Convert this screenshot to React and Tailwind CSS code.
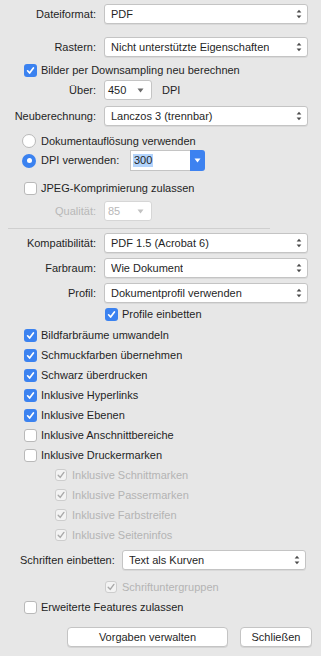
import React from 'react';

const font = { fontFamily: '"Liberation Sans", Arial, sans-serif' };

const UpDown = () => (
  <svg width="6" height="10" viewBox="0 0 6 10" className="shrink-0">
    <path d="M3 0.8 L5.4 3.6 H0.6 Z" fill="#4a4a4a" />
    <path d="M3 9.2 L0.6 6.4 H5.4 Z" fill="#4a4a4a" />
  </svg>
);

const DownTri = ({ color = '#6b6b6b' }) => (
  <svg width="7" height="5" viewBox="0 0 7 5" className="shrink-0">
    <path d="M0.5 0.5 H6.5 L3.5 4.5 Z" fill={color} />
  </svg>
);

const Select = ({ value, className = '' }) => (
  <div className={`h-[20px] flex items-center justify-between bg-white border border-[#c4c4c4] rounded-[3px] shadow-[0_1px_0_rgba(0,0,0,0.06)] pl-[6px] pr-[5px] ${className}`}>
    <span className="text-[#1f1f1f] truncate">{value}</span>
    <UpDown />
  </div>
);

const Popup = ({ value, disabled }) => (
  <div className={`h-[20px] w-[48px] flex items-center justify-between bg-white border rounded-[3px] pl-[3px] pr-[7px] ${disabled ? 'border-[#d6d6d6] text-[#b8b8b8]' : 'border-[#c4c4c4] text-[#1f1f1f]'}`}>
    <span>{value}</span>
    <DownTri color={disabled ? '#c2c2c2' : '#6b6b6b'} />
  </div>
);

const Check = ({ checked, disabled }) => {
  if (disabled) {
    return (
      <div className="w-[12px] h-[12px] shrink-0 rounded-[3px] border border-[#cdcdcd] bg-[#f3f3f3] flex items-center justify-center">
        <svg width="10" height="10" viewBox="0 0 10 10">
          <path d="M2.2 5.2 L4.2 7.4 L7.9 2.4" fill="none" stroke="#a9a9a9" strokeWidth="1.4" strokeLinecap="round" strokeLinejoin="round" />
        </svg>
      </div>
    );
  }
  if (checked) {
    return (
      <div className="w-[13px] h-[13px] shrink-0 rounded-[3px] bg-[#3b82f0] flex items-center justify-center">
        <svg width="11" height="11" viewBox="0 0 11 11">
          <path d="M2.6 5.8 L4.6 8 L8.4 3" fill="none" stroke="white" strokeWidth="1.7" strokeLinecap="round" strokeLinejoin="round" />
        </svg>
      </div>
    );
  }
  return <div className="w-[13px] h-[13px] shrink-0 rounded-[3px] border border-[#b9b9b9] bg-white" />;
};

const Radio = ({ checked }) =>
  checked ? (
    <div className="w-[14px] h-[14px] shrink-0 rounded-full bg-[#3b82f0] flex items-center justify-center">
      <div className="w-[5px] h-[5px] rounded-full bg-white" />
    </div>
  ) : (
    <div className="w-[14px] h-[14px] shrink-0 rounded-full border border-[#b9b9b9] bg-white" />
  );

const LabelRow = ({ label, children, className = '' }) => (
  <div className={`flex items-center ${className}`}>
    <div className="w-[97px] text-right pr-[1px] shrink-0">{label}</div>
    <div className="ml-[7px] flex items-center">{children}</div>
  </div>
);

const CheckRow = ({ label, checked, disabled, indent = 'pl-[24px]' }) => (
  <div className={`h-[20px] flex items-center gap-[4px] ${indent}`}>
    <Check checked={checked} disabled={disabled} />
    <span className={disabled ? 'text-[#b4b4b4] ml-[1px]' : 'text-[#1f1f1f]'}>{label}</span>
  </div>
);

export default function App() {
  return (
    <div style={font} className="w-[321px] h-[656px] bg-[#e7e7e7] text-[11px] text-[#1f1f1f] overflow-hidden flex flex-col">
      <LabelRow label="Dateiformat:" className="mt-[4px]">
        <Select value="PDF" className="w-[204px]" />
      </LabelRow>
      <LabelRow label="Rastern:" className="mt-[13px]">
        <Select value="Nicht unterstützte Eigenschaften" className="w-[204px]" />
      </LabelRow>
      <div className="h-[14px] mt-[6px] flex items-center gap-[4px] pl-[24px]">
        <Check checked />
        <span>Bilder per Downsampling neu berechnen</span>
      </div>
      <LabelRow label="Über:" className="mt-[3px]">
        <Popup value="450" />
        <span className="ml-[10px]">DPI</span>
      </LabelRow>
      <LabelRow label="Neuberechnung:" className="mt-[6px]">
        <Select value="Lanczos 3 (trennbar)" className="w-[204px]" />
      </LabelRow>
      <div className="h-[14px] mt-[8px] flex items-center gap-[5px] pl-[22px]">
        <Radio />
        <span>Dokumentauflösung verwenden</span>
      </div>
      <div className="h-[21px] mt-[2px] flex items-center pl-[22px]">
        <Radio checked />
        <span className="ml-[5px] w-[89px]">DPI verwenden:</span>
        <div className="h-[21px] w-[60px] bg-white border border-[#c4c4c4] border-r-0 flex items-center pl-[2px]">
          <span className="bg-[#b3d4fc] px-[1px] leading-[13px]">300</span>
        </div>
        <div className="h-[21px] w-[15px] bg-[#3d82f0] rounded-r-[3px] flex items-center justify-center">
          <DownTri color="#ffffff" />
        </div>
      </div>
      <div className="h-[14px] mt-[10px] flex items-center gap-[4px] pl-[24px]">
        <Check />
        <span>JPEG-Komprimierung zulassen</span>
      </div>
      <LabelRow label={<span className="text-[#b8b8b8]">Qualität:</span>} className="mt-[6px]">
        <Popup value="85" disabled />
      </LabelRow>
      <div className="h-px bg-[#cfcfcf] ml-[8px] w-[262px] mt-[7px]" />
      <LabelRow label="Kompatibilität:" className="mt-[4px]">
        <Select value="PDF 1.5 (Acrobat 6)" className="w-[204px]" />
      </LabelRow>
      <LabelRow label="Farbraum:" className="mt-[5px]">
        <Select value="Wie Dokument" className="w-[204px]" />
      </LabelRow>
      <LabelRow label="Profil:" className="mt-[5px]">
        <Select value="Dokumentprofil verwenden" className="w-[204px]" />
      </LabelRow>
      <CheckRow label="Profile einbetten" checked indent="pl-[105px] mt-[1px]" />
      <div className="flex flex-col mt-[1px]">
        <CheckRow label="Bildfarbräume umwandeln" checked />
        <CheckRow label="Schmuckfarben übernehmen" checked />
        <CheckRow label="Schwarz überdrucken" checked />
        <CheckRow label="Inklusive Hyperlinks" checked />
        <CheckRow label="Inklusive Ebenen" checked />
        <CheckRow label="Inklusive Anschnittbereiche" />
        <CheckRow label="Inklusive Druckermarken" />
        <CheckRow label="Inklusive Schnittmarken" disabled indent="pl-[55px]" />
        <CheckRow label="Inklusive Passermarken" disabled indent="pl-[55px]" />
        <CheckRow label="Inklusive Farbstreifen" disabled indent="pl-[55px]" />
        <CheckRow label="Inklusive Seiteninfos" disabled indent="pl-[55px]" />
      </div>
      <div className="flex items-center mt-[5px] pl-[20px]">
        <span className="w-[102px]">Schriften einbetten:</span>
        <Select value="Text als Kurven" className="w-[184px]" />
      </div>
      <CheckRow label="Schriftuntergruppen" disabled indent="pl-[105px] mt-[7px]" />
      <CheckRow label="Erweiterte Features zulassen" />
      <div className="flex items-center mt-[10px] pl-[67px] gap-[12px]">
        <button className="h-[20px] w-[161px] bg-white border border-[#c4c4c4] rounded-[4px] shadow-[0_1px_0_rgba(0,0,0,0.08)] text-[#1f1f1f]">
          Vorgaben verwalten
        </button>
        <button className="h-[20px] w-[72px] bg-white border border-[#c4c4c4] rounded-[4px] shadow-[0_1px_0_rgba(0,0,0,0.08)] text-[#1f1f1f]">
          Schließen
        </button>
      </div>
    </div>
  );
}
